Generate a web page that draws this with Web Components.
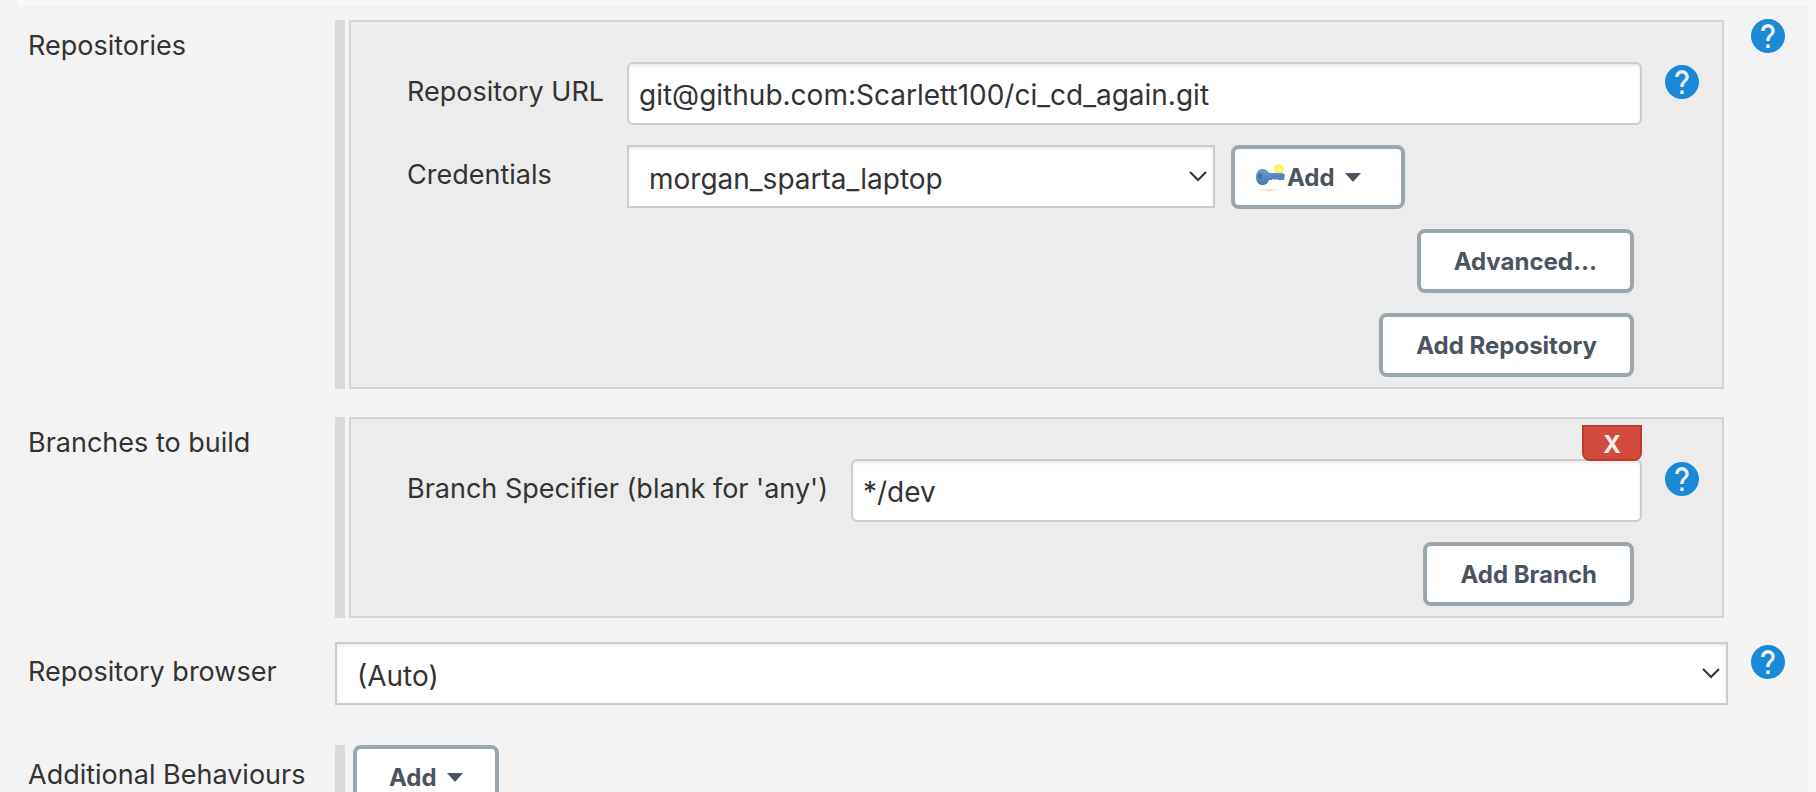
<!DOCTYPE html>
<html lang="en">
<head>
<meta charset="utf-8">
<title>Source Code Management</title>
<style>
  html { scrollbar-width: none; background: #f9f9f9; }
  body {
    margin: 0;
    font-family: Inter, "Liberation Sans", sans-serif;
    font-size: 27px;
    line-height: 32px;
    color: #333;
  }
</style>
</head>
<body>
<scm-form>
  <config-row label="Repositories">
    <repeat-chunk>
      <config-row inner type="text" label="Repository URL" value="git@github.com:Scarlett100/ci_cd_again.git" help></config-row>
      <config-row inner type="select" label="Credentials" value="morgan_sparta_laptop" compact>
        <config-button slot="after" icon caret>Add</config-button>
      </config-row>
      <config-button end>Advanced...</config-button>
      <config-button end>Add Repository</config-button>
    </repeat-chunk>
  </config-row>
  <config-row label="Branches to build" nohelp>
    <repeat-chunk removable>
      <config-row inner wide type="text" label="Branch Specifier (blank for 'any')" value="*/dev" help></config-row>
      <config-button end>Add Branch</config-button>
    </repeat-chunk>
  </config-row>
  <config-row type="select" label="Repository browser" value="(Auto)" help></config-row>
  <config-row label="Additional Behaviours" last nohelp>
    <hetero-list><config-button caret>Add</config-button></hetero-list>
  </config-row>
</scm-form>

<script>
class ScmForm extends HTMLElement {
  constructor() {
    super();
    this.attachShadow({ mode: "open" }).innerHTML = `
      <style>
        :host { display: block; margin-right: 8px; background: #f3f3f3; }
        .strip { height: 6px; margin-left: 18px; background: #f9f9f9; }
        form { display: flex; flex-direction: column; gap: 24px; padding: 10px 23px 24px 28px; }
      </style>
      <div class="strip"></div>
      <form><slot></slot></form>`;
  }
}

class HelpButton extends HTMLElement {
  constructor() {
    super();
    this.attachShadow({ mode: "open" }).innerHTML = `
      <style>
        :host { display: block; width: 34px; height: 34px; }
        button { display: block; width: 34px; height: 34px; padding: 0; border: 0; background: none; cursor: pointer; }
        svg { display: block; }
      </style>
      <button type="button" aria-label="Help">
        <svg width="34" height="34" viewBox="2 2 20 20" aria-hidden="true"><path fill="#1b8ad6" d="M12 2C6.48 2 2 6.48 2 12s4.48 10 10 10 10-4.480 10-10S17.520 2 12 2zm1 17h-2v-2h2v2zm2.070-7.750l-.9.920C13.450 12.900 13 13.500 13 15h-2v-.5c0-1.100.45-2.100 1.170-2.830l1.240-1.260c.37-.36.59-.86.59-1.410 0-1.100-.9-2-2-2s-2 .9-2 2H8c0-2.210 1.790-4 4-4s4 1.790 4 4c0 .88-.36 1.680-.93 2.250z"/></svg>
      </button>`;
  }
}

class ConfigButton extends HTMLElement {
  connectedCallback() {
    if (this.shadowRoot) return;
    const icon = this.hasAttribute("icon") ? `
      <svg width="32" height="30" viewBox="0 0 32 30" aria-hidden="true">
        <defs>
          <radialGradient id="shade"><stop offset="0" stop-color="#ddd"/><stop offset="1" stop-color="#fff"/></radialGradient>
          <linearGradient id="blue" x2="0" y2="1"><stop offset="0" stop-color="#6d9bd2"/><stop offset="1" stop-color="#4677b5"/></linearGradient>
        </defs>
        <ellipse cx="15" cy="27" rx="13" ry="2" fill="url(#shade)"/>
        <circle cx="24" cy="6" r="5" fill="#fff35c"/>
        <circle cx="24" cy="6" r="2" fill="#fff9a8"/>
        <path fill="url(#blue)" d="M7 6c4 0 6 2 7 4h14l2 2-1 5h-6l-1-1-2 1-2-1-1 1h-3c-1 3-3 5-7 5-4 0-6-4-6-8s2-8 6-8z"/>
        <ellipse cx="5" cy="13" rx="2" ry="3" fill="#4a6f9f"/>
        <path stroke="#4a75ad" stroke-width="1" d="M15 13h14"/>
      </svg>` : "";
    const caret = this.hasAttribute("caret") ? `<i></i>` : "";
    this.attachShadow({ mode: "open" }).innerHTML = `
      <style>
        :host { display: block; flex: none; }
        :host([end]) { align-self: flex-end; margin-right: 8px; }
        button {
          box-sizing: border-box; height: 64px; padding: 2px 32px 0;
          display: flex; align-items: center;
          border: 4px solid #9ba7af; border-radius: 8px; background: #fff;
          font: 700 24px/32px Inter, "Liberation Sans", sans-serif; color: #4b545e; cursor: pointer;
        }
        :host([end]) button { padding: 2px 33px 0; }
        :host([icon]) button { width: 174px; padding: 2px 20px 0; }
        i { margin: 0 0 2px 10px; border: 8px solid transparent; border-top: 9px solid #4b545e; border-bottom: 0; }
      </style>
      <button type="button">${icon}<slot></slot>${caret}</button>`;
  }
}

class RepeatChunk extends HTMLElement {
  connectedCallback() {
    if (this.shadowRoot) return;
    const remove = this.hasAttribute("removable") ? `<button type="button" aria-label="Delete">X</button>` : "";
    this.attachShadow({ mode: "open" }).innerHTML = `
      <style>
        :host { display: block; margin-top: 4px; border-left: 10px solid #dadada; padding: 0 4px; }
        .chunk {
          position: relative; display: flex; flex-direction: column; gap: 20px;
          padding: 40px 80px 10px 56px; border: 2px solid #d4d4d4; background: #ececec;
        }
        button {
          position: absolute; z-index: 1; top: 6px; right: 80px;
          box-sizing: border-box; width: 60px; height: 36px; padding: 2px 0 0;
          border: 2px solid #bb3b31; border-radius: 0 0 8px 8px; background: #d14b3f;
          font: 700 24px/32px Inter, "Liberation Sans", sans-serif; color: #eee; cursor: pointer;
        }
      </style>
      <div class="chunk">${remove}<slot></slot></div>`;
  }
}

class HeteroList extends HTMLElement {
  constructor() {
    super();
    this.attachShadow({ mode: "open" }).innerHTML = `
      <style>:host { display: flex; border-left: 10px solid #dadada; padding-left: 8px; }</style>
      <slot></slot>`;
  }
}

class ConfigRow extends HTMLElement {
  connectedCallback() {
    if (this.shadowRoot) return;
    const type = this.getAttribute("type");
    const label = this.getAttribute("label");
    const value = this.getAttribute("value");
    let control = `<div class="group" role="group" aria-labelledby="name"><slot></slot></div>`;
    if (type === "text") control = `<input id="control" type="text" value="${value}">`;
    if (type === "select") control = `
      <div class="select">
        <select id="control"><option>${value}</option></select>
        <svg width="18" height="12" viewBox="0 0 18 12" aria-hidden="true"><path d="M1 1l8 8 8-8" fill="none" stroke="#333" stroke-width="2"/></svg>
      </div>`;
    const name = type ? `<label for="control">${label}</label>` : `<span class="name" id="name">${label}</span>`;
    const inner = this.hasAttribute("inner");
    const help = this.hasAttribute("help") || (!inner && !this.hasAttribute("nohelp"));
    this.attachShadow({ mode: "open" }).innerHTML = `
      <style>
        :host { display: flex; align-items: flex-start; --name: 307px; }
        :host([inner]) { --name: 220px; margin-right: -57px; }
        :host([wide]) { --name: 444px; }
        :host([last]) { margin-top: 16px; }
        label, .name { flex: none; width: var(--name); padding-top: 14px; white-space: nowrap; }
        .field { flex: 1; min-width: 0; display: flex; gap: 16px; }
        .group { flex: 1; min-width: 0; }
        .help { flex: none; width: 34px; padding: 3px 0 0 23px; }
        input, select {
          box-sizing: border-box; display: block; width: 100%; height: 63px; margin: 0;
          border: 2px solid #ccc; background: #fff; color: #333;
          box-shadow: inset 0 2px 3px rgba(0,0,0,.09);
          font: 400 28px/32px Inter, "Liberation Sans", sans-serif;
        }
        input { padding: 2px 10px 0; border-radius: 6px; }
        select { appearance: none; border-radius: 0; padding: 4px 40px 0 20px; }
        .select { position: relative; flex: 1; min-width: 0; }
        :host([compact]) .select { flex: none; width: 588px; }
        .select svg { position: absolute; right: 8px; top: 26px; pointer-events: none; }
      </style>
      ${name}
      <div class="field">${control}<slot name="after"></slot></div>
      <div class="help">${help ? "<help-button></help-button>" : ""}</div>`;
  }
}

customElements.define("help-button", HelpButton);
customElements.define("config-button", ConfigButton);
customElements.define("repeat-chunk", RepeatChunk);
customElements.define("hetero-list", HeteroList);
customElements.define("config-row", ConfigRow);
customElements.define("scm-form", ScmForm);
</script>
</body>
</html>
